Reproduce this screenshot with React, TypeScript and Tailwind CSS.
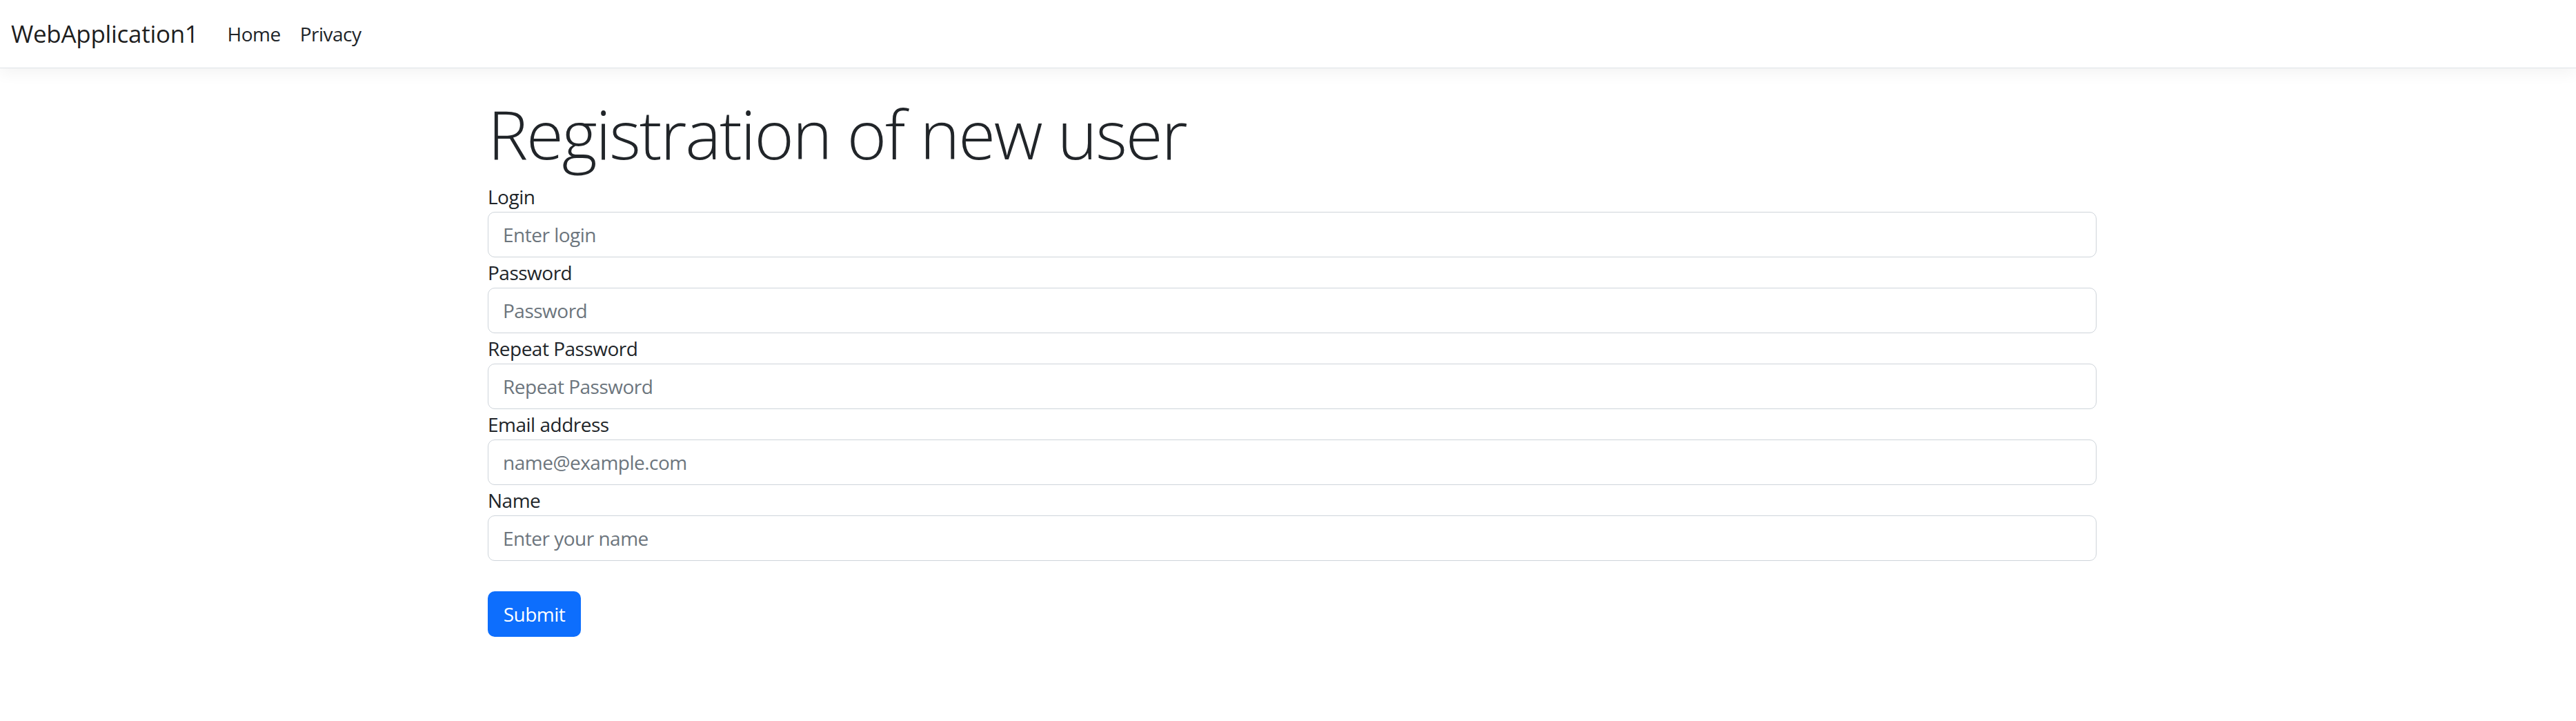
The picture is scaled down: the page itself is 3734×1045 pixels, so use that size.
import type { ReactNode } from 'react'

const fields = [
  { label: 'Login', placeholder: 'Enter login', type: 'text' },
  { label: 'Password', placeholder: 'Password', type: 'password' },
  { label: 'Repeat Password', placeholder: 'Repeat Password', type: 'password' },
  { label: 'Email address', placeholder: 'name@example.com', type: 'email' },
  { label: 'Name', placeholder: 'Enter your name', type: 'text' },
] as const

function NavItem({ children }: { children: ReactNode }) {
  return (
    <a href="#" className="px-[14px] text-[28px] tracking-[-0.5px] text-[#212529] leading-[42px]">
      {children}
    </a>
  )
}

export default function App() {
  return (
    <div className="min-h-screen bg-white text-[#212529] font-['Open_Sans',sans-serif]">
      <header className="h-[99px] flex items-center px-[16px] border-b border-[#dee2e6] bg-white shadow-[0_7px_21px_rgba(0,0,0,0.05)]">
        <a href="#" className="text-[35px] leading-[52px] tracking-[-0.3px] text-black/90 mr-[28px]">
          WebApplication1
        </a>
        <nav className="flex">
          <NavItem>Home</NavItem>
          <NavItem>Privacy</NavItem>
        </nav>
      </header>

      <main className="ml-[707px] w-[2332px]">
        <h1 className="mt-[35px] mb-[11px] text-[98px] leading-[118px] font-light tracking-[-2.2px]">
          Registration of new user
        </h1>

        <form className="flex flex-col" onSubmit={(e) => e.preventDefault()}>
          {fields.map((f) => (
            <label key={f.label} className="flex flex-col">
              <span className="text-[28px] leading-[44px] tracking-[-0.5px]">{f.label}</span>
              <input
                type={f.type}
                placeholder={f.placeholder}
                className="h-[66px] px-[21px] text-[28px] tracking-[-0.5px] border border-[#ced4da] rounded-[10px] outline-none placeholder:text-[#6c757d]"
              />
            </label>
          ))}

          <button
            type="submit"
            className="mt-[44px] w-[135px] h-[66px] rounded-[10px] bg-[#0d6efd] text-white text-[28px] tracking-[-0.5px]"
          >
            Submit
          </button>
        </form>
      </main>
    </div>
  )
}
